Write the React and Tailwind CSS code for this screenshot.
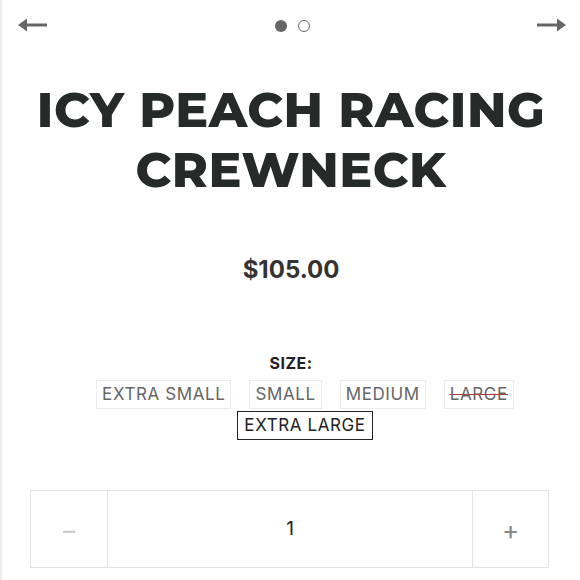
import React, { useState } from 'react';

function Arrow({ dir }) {
  return (
    <svg width="29" height="14" viewBox="0 0 29 14" className={dir === 'right' ? 'rotate-180' : ''}>
      <path d="M0 7 L9 0.5 L9 5.6 L29 5.6 L29 8.4 L9 8.4 L9 13.5 Z" fill="#666" />
    </svg>
  );
}

const sizes = [
  { label: 'EXTRA SMALL' },
  { label: 'SMALL' },
  { label: 'MEDIUM' },
  { label: 'LARGE', soldOut: true },
  { label: 'EXTRA LARGE' },
];

export default function App() {
  const [active, setActive] = useState('EXTRA LARGE');
  const [qty, setQty] = useState(1);

  return (
    <div className="w-[580px] h-[580px] overflow-hidden bg-white border-l-2 border-[#ececec] font-['Inter',sans-serif]">
      {/* Carousel nav */}
      <div className="flex items-center justify-between pl-[16px] pr-[14px] pt-[9px] h-[41px]">
        <Arrow dir="left" />
        <div className="flex items-center gap-[11px] pt-[2px]">
          <span className="w-[12px] h-[12px] rounded-full bg-[#666]" />
          <span className="w-[12px] h-[12px] rounded-full border-[1.5px] border-[#666]" />
        </div>
        <Arrow dir="right" />
      </div>

      {/* Title */}
      <h1 className="mt-[39px] text-center text-[#262a29] font-['Montserrat','Inter',sans-serif] font-extrabold text-[49px] leading-[60px] tracking-[0.5px]">
        ICY PEACH RACING<br />CREWNECK
      </h1>

      {/* Price */}
      <div className="mt-[55px] text-center text-[#333] font-bold text-[24px] leading-[30px]">
        $105.00
      </div>

      {/* Size */}
      <div className="mt-[68px] flex flex-col items-center">
        <div className="text-[#222] font-bold text-[16px] leading-[20px] tracking-[0.5px]">SIZE:</div>
        <div className="mt-[7px] ml-[28px] flex flex-wrap justify-center gap-x-[18px] gap-y-[2px] w-[460px]">
          {sizes.map((s) => {
            const isActive = active === s.label;
            return (
              <button
                key={s.label}
                onClick={() => !s.soldOut && setActive(s.label)}
                className={`h-[29px] px-[5px] text-[17px] leading-[27px] tracking-[0.6px] ${
                  isActive
                    ? 'border-[1.5px] border-[#222] text-[#222] px-[6px]'
                    : 'border border-[#ebebeb] text-[#666]'
                } ${s.soldOut ? 'line-through decoration-[#b23b3b] text-[#333]' : ''}`}
              >
                {s.label}
              </button>
            );
          })}
        </div>
      </div>

      {/* Quantity */}
      <div className="mt-[50px] ml-[28px] mr-[31px] flex h-[78px] border border-[#e3e3e3]">
        <button
          onClick={() => setQty(Math.max(1, qty - 1))}
          className="w-[77px] border-r border-[#e3e3e3] flex items-center justify-center text-[#ccc] text-[26px]"
        >
          −
        </button>
        <div className="flex-1 flex items-center justify-center text-[#222] text-[19px]">{qty}</div>
        <button
          onClick={() => setQty(qty + 1)}
          className="w-[76px] border-l border-[#e3e3e3] flex items-center justify-center text-[#888] text-[26px]"
        >
          +
        </button>
      </div>
    </div>
  );
}
